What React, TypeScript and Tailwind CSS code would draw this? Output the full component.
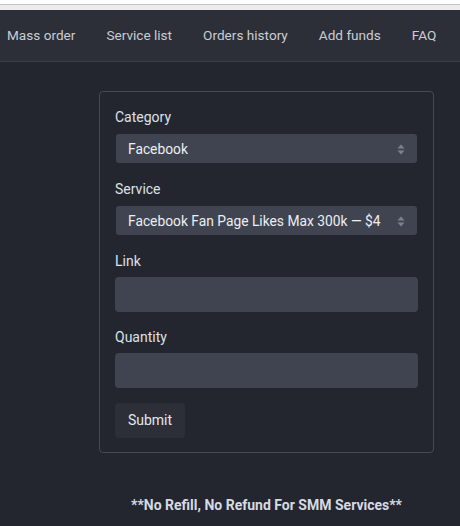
const NAV = ['Mass order', 'Service list', 'Orders history', 'Add funds', 'FAQ'];

function SelectArrows() {
  return (
    <svg width="8" height="11" viewBox="0 0 8 11" className="shrink-0">
      <path d="M4 0.5 L7.5 4.5 L0.5 4.5 Z" fill="#7d818c" />
      <path d="M4 10.5 L7.5 6.5 L0.5 6.5 Z" fill="#7d818c" />
    </svg>
  );
}

function FakeSelect({ value }: { value: string }) {
  return (
    <div className="flex items-center justify-between h-[29px] ml-px mr-px pl-3 pr-[12px] pt-px rounded-[3px] bg-[#404451] text-[13.8px] text-[#eceef2]">
      <span className="truncate">{value}</span>
      <SelectArrows />
    </div>
  );
}

function Field({ label, children }: { label: string; children: React.ReactNode }) {
  return (
    <div>
      <label className="block text-[14px] leading-5 text-[#dde1e8] mb-[7px]">{label}</label>
      {children}
    </div>
  );
}

export default function App() {
  return (
    <div
      className="w-[460px] h-[526px] overflow-hidden bg-[#24262f] flex flex-col"
      style={{ fontFamily: 'Roboto, "Noto Sans", sans-serif' }}
    >
      {/* browser chrome strip */}
      <div className="h-[4px] bg-white" />
      <div className="h-px bg-[#c4c4c4]" />
      <div className="h-[5px] bg-[#ececec]" />

      {/* Navbar */}
      <nav className="h-[52px] bg-[#2c2f38] border-b border-[#3c3f49] flex items-center pl-[7px] gap-[31px] text-[13.6px] text-[#c9cdd5] whitespace-nowrap">
        {NAV.map((n) => (
          <span key={n}>{n}</span>
        ))}
      </nav>

      {/* Order form */}
      <div className="ml-[99px] mt-[29px] w-[335px] border border-[#464953] rounded-[4px] px-[15px] pt-[15px] pb-[14px] flex flex-col gap-[16px]">
        <Field label="Category">
          <FakeSelect value="Facebook" />
        </Field>
        <Field label="Service">
          <FakeSelect value="Facebook Fan Page Likes Max 300k — $4" />
        </Field>
        <div className="flex flex-col gap-[15px]">
          <div>
            <label className="block text-[14px] leading-5 text-[#dde1e8] mb-[6px]">Link</label>
            <div className="h-[35px] rounded-[4px] bg-[#404451]" />
          </div>
          <div>
            <label className="block text-[14px] leading-5 text-[#dde1e8] mb-[6px]">Quantity</label>
            <div className="h-[35px] rounded-[4px] bg-[#404451]" />
          </div>
          <button className="self-start w-[70px] h-[35px] rounded-[4px] bg-[#2c2f38] text-[14px] text-[#e4e7ec]">
            Submit
          </button>
        </div>
      </div>

      <p className="ml-[99px] w-[335px] mt-[42px] text-center text-[14px] font-bold text-[#d6dae2]">
        **No Refill, No Refund For SMM Services**
      </p>
    </div>
  );
}
